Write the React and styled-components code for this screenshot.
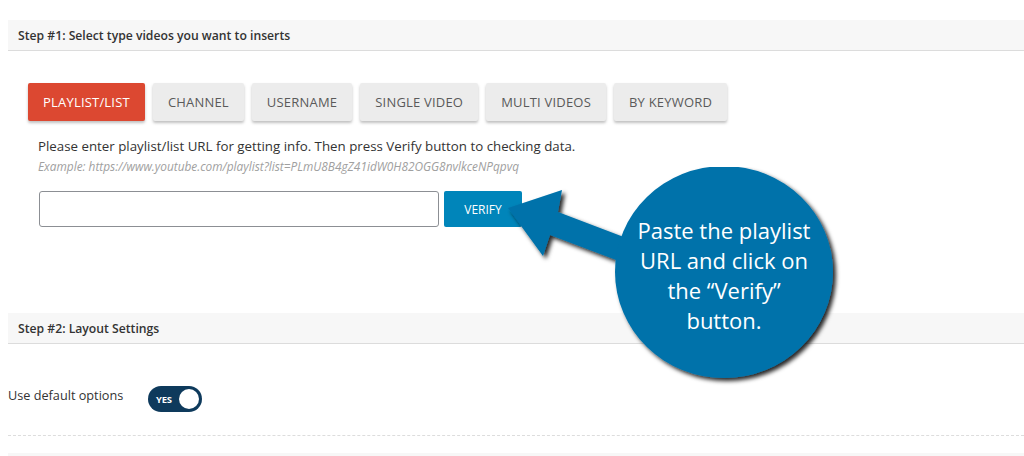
import React from 'react'
import styled, { createGlobalStyle } from 'styled-components';

const Global = createGlobalStyle`
  html, body { margin: 0; padding: 0; background: #fff; }
  body { font-family: "Open Sans", "Noto Sans", sans-serif; color: #333; overflow: hidden; }
`;

const tabs = ['Playlist/List', 'Channel', 'Username', 'Single Video', 'Multi Videos', 'By Keyword'];

const App = () => {
  return (
    <Page>
      <Global />
      <SectionHeader top="20px">Step #1: Select type videos you want to inserts</SectionHeader>
      <StepBody>
        <TabRow>
          {tabs.map((t, i) => (
            <Tab key={t} active={i === 0}>{t}</Tab>
          ))}
        </TabRow>
        <Hint>Please enter playlist/list URL for getting info. Then press Verify button to checking data.</Hint>
        <Example>Example: https://www.youtube.com/playlist?list=PLmU8B4gZ41idW0H82OGG8nvlkceNPqpvq</Example>
        <VerifyRow>
          <UrlInput type="text" />
          <VerifyButton>Verify</VerifyButton>
        </VerifyRow>
      </StepBody>
      <SectionHeader top="0">Step #2: Layout Settings</SectionHeader>
      <OptionRow>
        <OptionLabel>Use default options</OptionLabel>
        <Toggle>
          <span>YES</span>
          <Knob />
        </Toggle>
      </OptionRow>
      <Dashed />
      <BottomBar />

      <Callout>
        <svg width="360" height="240" viewBox="0 0 360 240">
          <defs>
            <filter id="sh" x="-10%" y="-10%" width="130%" height="130%">
              <feDropShadow dx="3" dy="3" stdDeviation="2" floodColor="#000" floodOpacity="0.85" />
            </filter>
          </defs>
          <g filter="url(#sh)" fill="#0072aa">
            <polygon points="8,41 62,23 58,45 150,80 140,102 50,68 43,89" />
            <ellipse cx="224" cy="105" rx="109" ry="106" />
          </g>
        </svg>
        <CalloutText>
          Paste the playlist<br />URL and click on<br />the “Verify”<br />button.
        </CalloutText>
      </Callout>
    </Page>
  )
}

export default App

const Page = styled.div`
  position: relative;
  width: 1024px;
  height: 456px;
  padding-left: 8px;
  box-sizing: border-box;
  overflow: hidden;
`;

const SectionHeader = styled.div`
  margin-top: ${props => props.top};
  height: 30px;
  display: flex;
  align-items: center;
  padding-left: 10px;
  background: #f7f7f7;
  border-bottom: 1px solid #dcdcdc;
  font-size: 12.2px;
  font-weight: 600;
  color: #333;
`;

const StepBody = styled.div`
  padding: 32px 0 0 20px;
  height: 262px;
  box-sizing: border-box;
`;

const TabRow = styled.div`
  display: flex;
  gap: 8px;
`;

const Tab = styled.div`
  height: 38px;
  padding: 0 15px;
  display: flex;
  align-items: center;
  border-radius: 2px;
  font-size: 13px;
  text-transform: uppercase;
  letter-spacing: 0.2px;
  background: ${props => props.active ? '#dc4831' : '#ececec'};
  color: ${props => props.active ? '#fff' : '#5a5a5a'};
  box-shadow: 0 2px 3px rgba(0,0,0,0.25);
`;

const Hint = styled.p`
  margin: 16px 0 0 10px;
  font-size: 13.3px;
  line-height: 18px;
  color: #333;
`;

const Example = styled.p`
  margin: 3px 0 0 10px;
  font-size: 11.85px;
  font-style: italic;
  color: #a0a0a0;
`;

const VerifyRow = styled.div`
  display: flex;
  gap: 5px;
  margin: 17px 0 0 11px;
`;

const UrlInput = styled.input`
  width: 400px;
  height: 36px;
  box-sizing: border-box;
  border: 1px solid #8c8f94;
  border-radius: 3px;
  background: #fff;
`;

const VerifyButton = styled.div`
  width: 78px;
  height: 36px;
  display: flex;
  align-items: center;
  justify-content: center;
  background: #0085ba;
  color: #fff;
  font-size: 12px;
  text-transform: uppercase;
  border-radius: 2px;
`;

const OptionRow = styled.div`
  display: flex;
  align-items: center;
  height: 26px;
  margin-top: 42px;
`;

const OptionLabel = styled.span`
  width: 140px;
  font-size: 12.7px;
  color: #333;
  margin-top: -8px;
`;

const Toggle = styled.div`
  width: 54px;
  height: 26px;
  border-radius: 13px;
  background: #0e3a5c;
  display: flex;
  align-items: center;
  justify-content: space-between;
  padding: 0 3px 0 8px;
  box-sizing: border-box;
  span {
    font-size: 9.5px;
    font-weight: 700;
    letter-spacing: -0.3px;
    color: #fff;
  }
`;

const Knob = styled.div`
  width: 20px;
  height: 20px;
  border-radius: 50%;
  background: #fff;
`;

const Dashed = styled.div`
  margin-top: 23px;
  border-top: 1px dashed #ddd;
`;

const BottomBar = styled.div`
  margin-top: 17px;
  height: 10px;
  background: #f7f7f7;
`;

const Callout = styled.div`
  position: absolute;
  left: 500px;
  top: 167px;
  width: 360px;
  height: 240px;
  svg { position: absolute; left: 0; top: 0; }
`;

const CalloutText = styled.div`
  position: absolute;
  left: 115px;
  top: 48px;
  width: 218px;
  text-align: center;
  color: #fff;
  font-family: "Open Sans", sans-serif;
  font-size: 22px;
  line-height: 30px;
`;
